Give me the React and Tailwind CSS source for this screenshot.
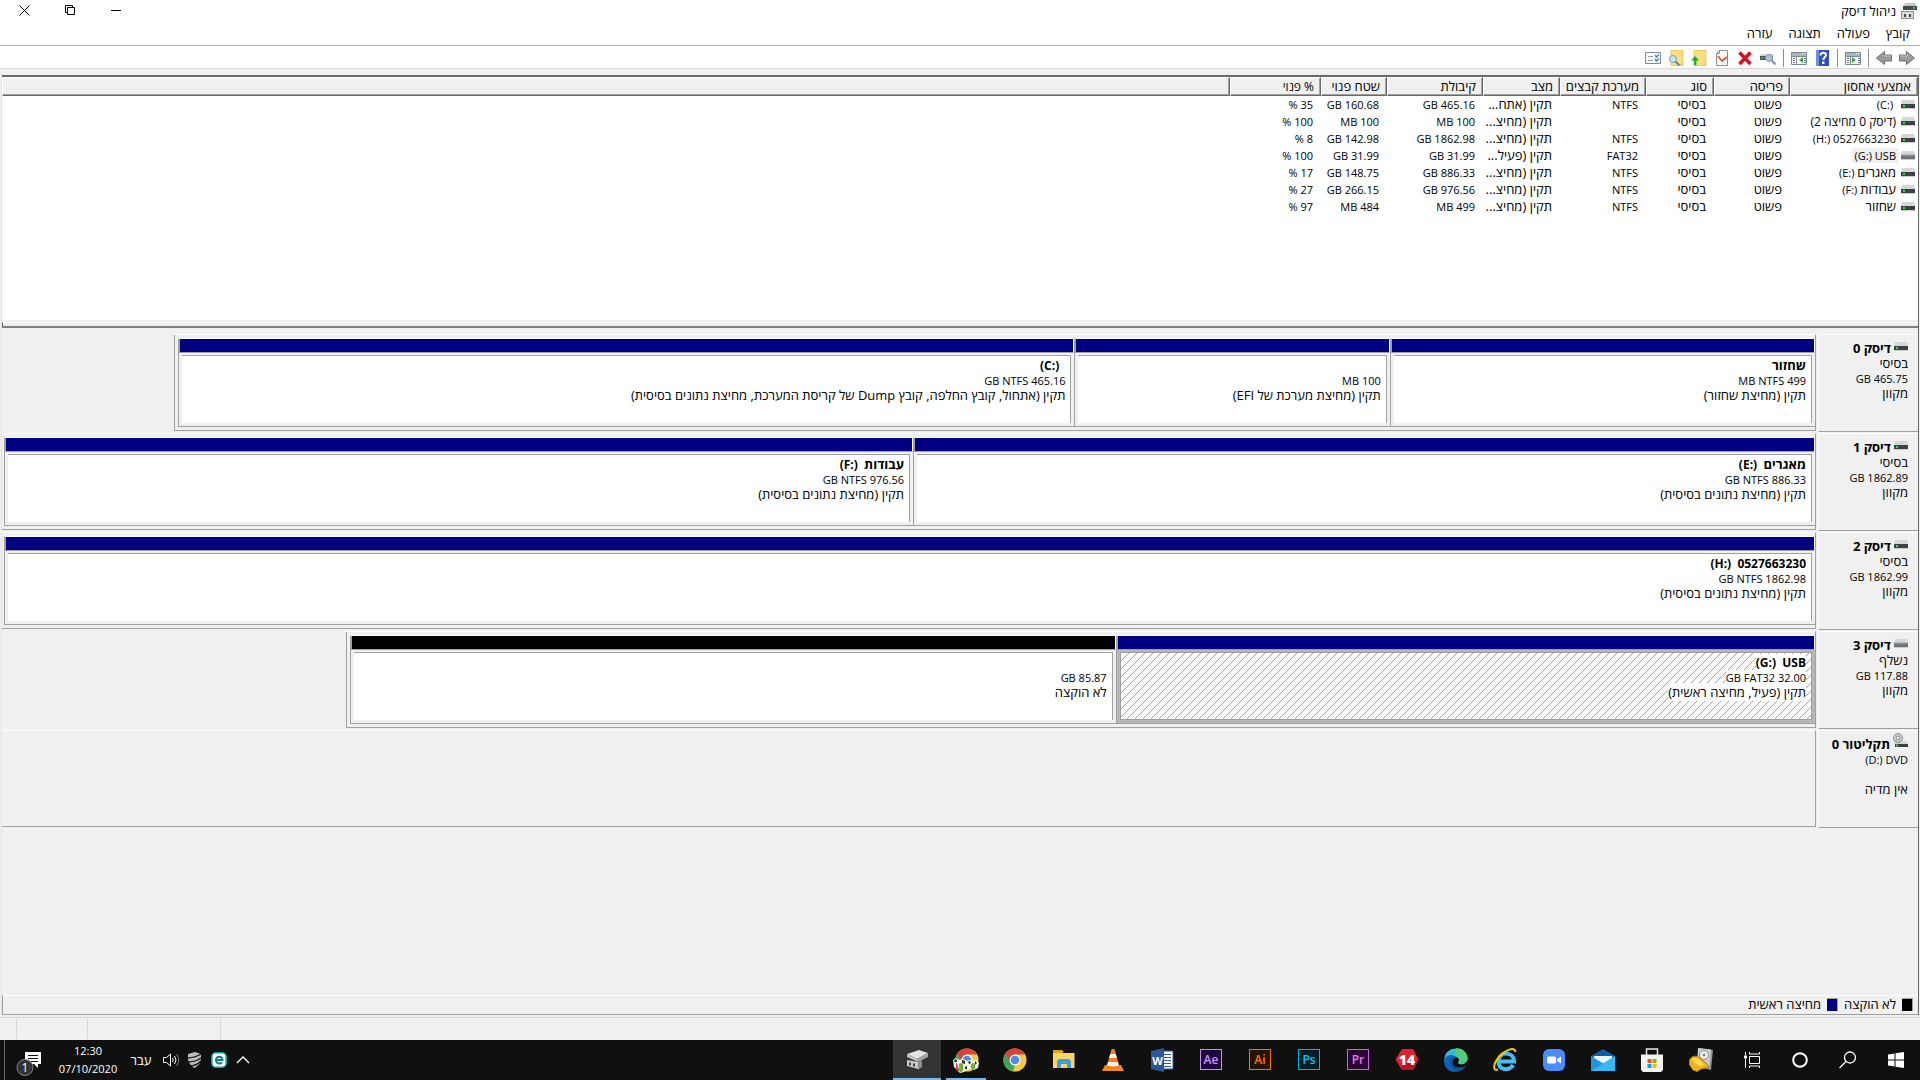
const MENUS = ['קובץ', 'פעולה', 'תצוגה', 'עזרה'];

const COLUMNS = [
  { key: 'name', label: 'אמצעי אחסון', width: 'w-[128px]' },
  { key: 'layout', label: 'פריסה', width: 'w-[76px]' },
  { key: 'type', label: 'סוג', width: 'w-[68px]' },
  { key: 'fs', label: 'מערכת קבצים', width: 'w-[86px]' },
  { key: 'status', label: 'מצב', width: 'w-[77px]' },
  { key: 'capacity', label: 'קיבולת', width: 'w-[96px]' },
  { key: 'free', label: 'שטח פנוי', width: 'w-[66px]' },
  { key: 'percent', label: '% פנוי', width: 'w-[91px]' },
];

const VOLUMES = [
  { name: '', letter: 'C', fs: 'NTFS', status: 'תקין (אתח...', capacity: '465.16 GB', free: '160.68 GB', percent: '35 %' },
  { name: '(דיסק 0 מחיצה 2)', fs: '', status: 'תקין (מחיצ...', capacity: '100 MB', free: '100 MB', percent: '100 %' },
  { name: '0527663230', letter: 'H', fs: 'NTFS', status: 'תקין (מחיצ...', capacity: '1862.98 GB', free: '142.98 GB', percent: '8 %' },
  { name: 'USB', letter: 'G', fs: 'FAT32', status: 'תקין (פעיל...', capacity: '31.99 GB', free: '31.99 GB', percent: '100 %', selected: true },
  { name: 'מאגרים', letter: 'E', fs: 'NTFS', status: 'תקין (מחיצ...', capacity: '886.33 GB', free: '148.75 GB', percent: '17 %' },
  { name: 'עבודות', letter: 'F', fs: 'NTFS', status: 'תקין (מחיצ...', capacity: '976.56 GB', free: '266.15 GB', percent: '27 %' },
  { name: 'שחזור', fs: 'NTFS', status: 'תקין (מחיצ...', capacity: '499 MB', free: '484 MB', percent: '97 %' },
];

const DISKS = [
  {
    title: 'דיסק 0',
    lines: ['בסיסי', '465.75 GB', 'מקוון'],
    span: 90.5,
    partitions: [
      { name: 'שחזור', size: '499 MB NTFS', status: 'תקין (מחיצת שחזור)', weight: 425 },
      { size: '100 MB', status: 'תקין (מחיצת מערכת של EFI)', weight: 315 },
      { name: '', letter: 'C', size: '465.16 GB NTFS', status: 'תקין (אתחול, קובץ החלפה, קובץ Dump של קריסת המערכת, מחיצת נתונים בסיסית)', weight: 897 },
    ],
  },
  {
    title: 'דיסק 1',
    lines: ['בסיסי', '1862.89 GB', 'מקוון'],
    span: 100,
    partitions: [
      { name: 'מאגרים', letter: 'E', size: '886.33 GB NTFS', status: 'תקין (מחיצת נתונים בסיסית)', weight: 902 },
      { name: 'עבודות', letter: 'F', size: '976.56 GB NTFS', status: 'תקין (מחיצת נתונים בסיסית)', weight: 909 },
    ],
  },
  {
    title: 'דיסק 2',
    lines: ['בסיסי', '1862.99 GB', 'מקוון'],
    span: 100,
    partitions: [
      { name: '0527663230', letter: 'H', size: '1862.98 GB NTFS', status: 'תקין (מחיצת נתונים בסיסית)', weight: 1 },
    ],
  },
  {
    title: 'דיסק 3',
    lines: ['נשלף', '117.88 GB', 'מקוון'],
    span: 81,
    removable: true,
    partitions: [
      { name: 'USB', letter: 'G', size: '32.00 GB FAT32', status: 'תקין (פעיל, מחיצה ראשית)', weight: 700, selected: true },
      { size: '85.87 GB', status: 'לא הוקצה', weight: 766, unallocated: true },
    ],
  },
  { title: 'תקליטור 0', lines: ['DVD', '', 'אין מדיה'], letter: 'D', optical: true },
];

// Hebrew glyphs are smaller on the body than Latin ones, so they get a larger size
function sizeOf(text = '') {
  if (!/[א-ת]/.test(text)) return 'text-[11px]';
  return /[\d%]/.test(text) ? 'text-[12px]' : 'text-[13px]';
}

export default function App() {
  return (
    <div
      dir="rtl"
      className="flex min-h-screen flex-col bg-[#f0f0f0] font-['Open_Sans','Liberation_Sans',sans-serif] text-[11px] leading-[15px] text-black"
    >
      <TitleBar />
      <MenuBar />
      <Toolbar />
      <main className="mt-[6px] mr-px ml-px flex grow flex-col border-r border-l border-r-[#696969] border-l-[#e3e3e3]">
        <VolumeList />
        <div className="h-[8px] pt-[2px]">
          <div className="h-[6px] border-t border-b-2 border-l border-t-white border-b-[#808080] border-l-[#696969]" />
        </div>
        <section className="grow pt-[6px]">
          {DISKS.map((disk) => (
            <DiskRow key={disk.title} disk={disk} />
          ))}
        </section>
        <Legend />
      </main>
      <footer dir="ltr" className="mt-[2px] flex h-[23px] border-t border-[#d7d7d7] py-px">
        <span className="w-[17px] border-r border-[#d7d7d7]" />
        <span className="w-[71px] border-r border-[#d7d7d7]" />
        <span className="w-[133px] border-r border-[#d7d7d7]" />
      </footer>
      <Taskbar />
    </div>
  );
}

function TitleBar() {
  return (
    <header className="flex h-[22px] items-center bg-white pr-[3px]">
      <TitleIcon />
      <h1 className="mr-[5px] text-[13px]">ניהול דיסק</h1>
      <div dir="ltr" className="mr-auto flex h-full pl-px">
        <button aria-label="סגור" className="flex w-[46px] justify-center pt-[5px]">
          <svg width="11" height="11" viewBox="0 0 11 11" stroke="#000" fill="none">
            <path d="M.5.5l10 10M10.500.5l-10 10" />
          </svg>
        </button>
        <button aria-label="שחזר" className="flex w-[46px] justify-center pt-[5px]">
          <svg width="10" height="10" viewBox="0 0 10 10" stroke="#000" fill="none">
            <path d="M2.500 7.500h-2v-7h7v2M2.500 2.500h7v7h-7z" />
          </svg>
        </button>
        <button aria-label="מזער" className="flex w-[46px] justify-center pt-[5px]">
          <svg width="10" height="11" viewBox="0 0 10 11" stroke="#000">
            <path d="M0 5.500h10" />
          </svg>
        </button>
      </div>
    </header>
  );
}

function MenuBar() {
  return (
    <nav className="flex h-[24px] items-center gap-[16px] border-b border-[#abadb3] bg-white pr-[10px] text-[13px]">
      {MENUS.map((menu) => (
        <button key={menu}>{menu}</button>
      ))}
    </nav>
  );
}

function Toolbar() {
  return (
    <div className="flex h-[23px] items-center gap-[7px] border-b border-[#d9d9d9] bg-white pt-px pr-[5px]">
      <Tool label="קדימה">
        <path d="M.5 5h7V1.500L15.500 8l-8 6.500V11h-7z" fill="#9b9b9b" stroke="#6e6e6e" />
        <path d="M1.500 6h7V4" fill="none" stroke="#c4c4c4" />
      </Tool>
      <Tool label="אחורה">
        <path d="M15.500 5h-7V1.500L.5 8l8 6.500V11h7z" fill="#9b9b9b" stroke="#6e6e6e" />
        <path d="M14.500 6h-7" fill="none" stroke="#c4c4c4" />
      </Tool>
      <Separator />
      <Tool label="הצג עץ">
        <PaneIcon arrow="M7 7v6l4-3z" />
      </Tool>
      <Separator />
      <Tool label="עזרה">
        <path d="M2 0h13v16H2z" fill="#2d50b8" />
        <path d="M2 0h3v16H2z" fill="#6f8fe0" />
        <path d="M6.500 5.500c0-4 5.500-3.500 5.500-.5 0 2-2.700 2-2.700 5" stroke="#fff" strokeWidth="2" fill="none" />
        <path d="M8 11.500h2.500V14H8z" fill="#fff" />
      </Tool>
      <Tool label="חלונית">
        <PaneIcon arrow="M12 7v6l-4-3z" />
      </Tool>
      <Separator />
      <Tool label="סרוק דיסקים">
        <path d="M1 4h12l1 2H0z" fill="#d0d3d5" />
        <path d="M0 6h13v4H0z" fill="#4c5052" />
        <path d="M1.500 7h2v2h-2z" fill="#28d340" />
        <circle cx="9" cy="8" r="3.500" fill="#a9c4d6" stroke="#8aa0ae" />
        <path d="M11.500 10.500l4 4" stroke="#7990a8" strokeWidth="2" />
      </Tool>
      <Tool label="מחק">
        <path d="M2.500 2.500l11 11.500M13.500 2.500L2.500 14" stroke="#d5101c" strokeWidth="3.500" />
      </Tool>
      <Tool label="מאפיינים">
        <path d="M5.500.5h8v15h-11V3.500z" fill="#fafafa" stroke="#8c8c8c" />
        <path d="M5.500.5v3h-3" fill="none" stroke="#8c8c8c" />
        <path d="M4 6l4 5 5-4" stroke="#e0532c" strokeWidth="1.800" fill="none" />
      </Tool>
      <Tool label="תיקיה למעלה">
        <FolderSheet />
        <path d="M3 15v-4.500H0L4 6l4 4.500H5.500V15z" fill="#1fae1f" />
      </Tool>
      <Tool label="חפש בתיקיה">
        <FolderSheet />
        <circle cx="5" cy="9" r="3.500" fill="#c6e2f2" stroke="#7d9fb5" />
        <path d="M7.500 11.500l4 4" stroke="#5a86b0" strokeWidth="2" />
      </Tool>
      <Tool label="רשימת משימות">
        <path d="M.5 2.500h15v11H.5z" fill="#f7fafc" stroke="#7d8b97" />
        <path d="M3 6.500h5M3 10.500h5" stroke="#9aa3aa" />
        <path d="M10 5l1.500 2L14 4.500M10 9l1.500 2L14 8.500" stroke="#3a8edb" strokeWidth="1.500" fill="none" />
      </Tool>
    </div>
  );
}

function Tool({ label, children }) {
  return (
    <button aria-label={label} className="size-[16px]">
      <svg width="16" height="16" viewBox="0 0 16 16">
        {children}
      </svg>
    </button>
  );
}

function Separator() {
  return <span className="h-[18px] w-px bg-[#8d8d8d]" />;
}

function PaneIcon({ arrow }) {
  return (
    <>
      <path d="M.5 2.500h15v12H.5z" fill="#fff" stroke="#7e8b97" />
      <path d="M1 3h14v3H1z" fill="#aab6c0" />
      <path d="M11 3.500h3" stroke="#fff" strokeDasharray="1 1" />
      <path d="M5.500 6v9M1 6.500h14" stroke="#7e8b97" />
      <path d="M2 8.500h2M2 10.500h2M2 12.500h2M13 8.500h2M13 10.500h2M13 12.500h2" stroke="#5f7080" />
      <path d={arrow} fill="#30b030" />
    </>
  );
}

function FolderSheet() {
  return (
    <>
      <path d="M3 .5h12v15H3z" fill="#fbe083" stroke="#e8c862" />
      <path d="M11 16l4-5v5z" fill="#efcb5c" />
    </>
  );
}

function TitleIcon() {
  return (
    <svg width="16" height="16" viewBox="0 0 16 16">
      <path d="M4 0h10l2 4H2z" fill="#c6c9ca" />
      <path d="M2 3h14v4H2z" fill="#45494b" />
      <path d="M12 4h2v2h-2z" fill="#2bd54a" />
      <path d="M0 8h13v8H0z" fill="#8e9091" />
      <path d="M1 9h11v6H1z" fill="#dcdcdc" />
      <path d="M3 11h2v3H3zM8 11h2v3H8z" fill="#4b4b4b" />
    </svg>
  );
}

function DriveIcon({ removable }) {
  return (
    <svg width="14" height="9" viewBox="0 0 14 9" className="shrink-0">
      <path d="M1 0h12l1 4H0z" fill="#d4d7d9" />
      <path d="M0 4h14v4H0z" fill={removable ? '#6f7476' : '#3d4143'} />
      <path d="M0 8h14v1H0z" fill="#c9cbcc" />
      {removable ? <path d="M0 3h14v1.500H0z" fill="#b5b9bb" /> : <path d="M2 5h2v2H2z" fill="#28e04a" />}
    </svg>
  );
}

function OpticalIcon() {
  return (
    <svg width="15" height="15" viewBox="0 0 15 15" className="shrink-0">
      <path d="M1 8h13l1 3H1z" fill="#d4d7d9" />
      <circle cx="5" cy="5" r="4.500" fill="#c9cccd" stroke="#8d9193" />
      <circle cx="5" cy="5" r="1.800" fill="#f4f4f4" stroke="#8d9193" />
      <path d="M2 11h13v3H2z" fill="#3d4143" />
      <path d="M3 11.500h2v2H3z" fill="#28e04a" />
    </svg>
  );
}

// Drive letters keep the colon on the right even inside Hebrew text
function VolumeName({ name, letter, gap = ' ' }) {
  return (
    <>
      {name}
      {letter ? (
        <>
          {gap}
          <bdi dir="ltr">({letter}:)</bdi>
        </>
      ) : null}
    </>
  );
}

function VolumeList() {
  return (
    <section className="h-[245px] border-t-2 border-[#696969] bg-white">
      <table className="w-full table-fixed border-separate border-spacing-0">
        <thead>
          <tr>
            {COLUMNS.map((column) => (
              <HeaderCell key={column.key} width={column.width}>
                {column.label}
              </HeaderCell>
            ))}
            <HeaderCell />
          </tr>
        </thead>
        <tbody>
          {VOLUMES.map((volume) => (
            <tr key={volume.capacity + volume.name} className="h-[17px]">
              <td className="p-0 pr-[3px]">
                <div className="flex h-[17px] items-center gap-[2px]">
                  <DriveIcon removable={volume.selected} />
                  <span className={`px-[3px] whitespace-pre ${volume.selected ? 'bg-[#f0f0f0]' : ''}`}>
                    <VolumeName
                      name={<span className={sizeOf(volume.name)}>{volume.name}</span>}
                      letter={volume.letter}
                    />
                  </span>
                </div>
              </td>
              <Cell>פשוט</Cell>
              <Cell>בסיסי</Cell>
              <Cell>{volume.fs}</Cell>
              <Cell>{volume.status}</Cell>
              <Cell>{volume.capacity}</Cell>
              <Cell>{volume.free}</Cell>
              <Cell>{volume.percent}</Cell>
              <td />
            </tr>
          ))}
        </tbody>
      </table>
    </section>
  );
}

function HeaderCell({ width = '', children }) {
  return (
    <th
      className={`h-[19px] border-t border-r border-b border-l border-t-white border-r-[#696969] border-b-[#696969] border-l-white bg-[#f0f0f0] p-0 pr-[6px] text-right font-normal whitespace-nowrap shadow-[inset_-1px_-1px_0_#a0a0a0] ${sizeOf(children)} ${width}`}
    >
      {children}
    </th>
  );
}

function Cell({ children }) {
  return <td className={`p-0 pr-[8px] whitespace-nowrap ${sizeOf(children)}`}>{children}</td>;
}

function DiskRow({ disk }) {
  return (
    <article className="flex h-[99px]">
      <div className="h-[98px] w-[100px] shrink-0 border-t border-b border-l border-t-white border-b-[#a0a0a0] border-l-white pt-[6px] pr-[10px]">
        <h2 className="flex items-start gap-[3px] text-[13px] font-bold">
          {disk.optical ? (
            <span className="-mt-[4px]">
              <OpticalIcon />
            </span>
          ) : (
            <span className="pt-px">
              <DriveIcon removable={disk.removable} />
            </span>
          )}
          {disk.title}
        </h2>
        {disk.lines.map((line, index) => (
          <p key={index} className={`h-[15px] ${sizeOf(line)}`}>
            <VolumeName name={line} letter={index === 0 ? disk.letter : undefined} />
          </p>
        ))}
      </div>
      <div className="mr-[2px] h-[97px] grow border-t border-r border-b border-t-white border-r-[#a0a0a0] border-b-[#a0a0a0]">
        {disk.partitions ? (
          <div className="flex h-full bg-[#f0f0f0]">
            <div
              className={`flex h-[96px] border-b border-[#a0a0a0] py-[3px] ${
                disk.span < 100 ? 'border-l pl-[3px]' : 'pl-[2px]'
              }`}
              style={{ width: `${disk.span}%` }}
            >
              {disk.partitions.map((partition) => (
                <Partition key={partition.size} partition={partition} />
              ))}
            </div>
            {disk.span < 100 ? <div className="-mt-px h-[97px] grow bg-[#f0f0f0]" /> : null}
          </div>
        ) : null}
      </div>
    </article>
  );
}

function Partition({ partition }) {
  const { name, letter, size, status, weight, selected, unallocated } = partition;
  const hatch =
    'border border-[#a0a0a0] bg-[linear-gradient(to_bottom_right,#fff_46%,#a0a0a0_46%,#a0a0a0_54%,#fff_54%)] bg-[length:8px_8px]';

  return (
    <div
      className={`flex min-w-0 basis-0 flex-col border-t border-b border-l border-t-white border-b-[#a0a0a0] border-l-[#a0a0a0] ${
        selected ? 'bg-[#b8b8b8]' : 'bg-[#f0f0f0]'
      }`}
      style={{ flexGrow: weight }}
    >
      <div
        className={`h-[14px] shrink-0 border-r border-b border-l border-r-white border-b-[#a0a0a0] border-l-[#a0a0a0] ${
          unallocated ? 'bg-black' : 'bg-[#000080]'
        }`}
      />
      <div
        className={`mx-[3px] mt-[2px] mb-[3px] grow pt-[2px] pr-[5px] ${
          selected ? hatch : 'border-t border-r border-[#a0a0a0] bg-white'
        }`}
      >
        <p className="h-[15px] text-[12px] font-bold whitespace-pre">
          <span className={selected ? 'bg-white' : ''}>
            <VolumeName
              name={<span className={/[א-ת]/.test(name) ? 'text-[13px]' : ''}>{name}</span>}
              letter={letter}
              gap="  "
            />
          </span>
        </p>
        <p className="h-[15px]">
          <span className={selected ? 'bg-white' : ''}>{size}</span>
        </p>
        <p className="h-[15px] text-[13px] whitespace-nowrap">
          <span className={selected ? 'bg-white' : ''}>{status}</span>
        </p>
      </div>
    </div>
  );
}

function Legend() {
  return (
    <div className="flex h-[20px] items-center gap-[6px] border-t border-b border-l border-t-white border-b-[#a0a0a0] border-l-[#a0a0a0] pr-[5px] pb-[2px] text-[13px]">
      <span className="h-[13px] w-[11px] border-t border-r border-[#a0a0a0] bg-black" />
      <span>לא הוקצה</span>
      <span className="h-[13px] w-[11px] border-t border-r border-[#a0a0a0] bg-[#000080]" />
      <span>מחיצה ראשית</span>
    </div>
  );
}

const APPS = [
  { label: 'ניהול כוננים', Icon: RecoveryIcon },
  { label: 'Microsoft Store', Icon: StoreIcon },
  { label: 'דואר', Icon: MailIcon },
  { label: 'Zoom', Icon: ZoomIcon },
  { label: 'Internet Explorer', Icon: ExplorerIcon },
  { label: 'Edge', Icon: EdgeIcon },
  { label: 'ערוץ 14', Icon: Badge14 },
  { label: 'Premiere', Icon: () => <Adobe text="Pr" tone="border-[#d45cf0] bg-[#2a0634] text-[#e07af5]" /> },
  { label: 'Photoshop', Icon: () => <Adobe text="Ps" tone="border-[#00b4e4] bg-[#001d26] text-[#00c8ff]" /> },
  { label: 'Illustrator', Icon: () => <Adobe text="Ai" tone="border-[#f07800] bg-[#261300] text-[#ff7c00]" /> },
  { label: 'After Effects', Icon: () => <Adobe text="Ae" tone="border-[#c090f8] bg-[#1f0540] text-[#c99cff]" /> },
  { label: 'Word', Icon: WordIcon },
  { label: 'VLC', Icon: VlcIcon },
  { label: 'סייר הקבצים', Icon: FolderIcon },
  { label: 'Chrome', Icon: ChromeIcon },
  { label: 'Chrome – פרופיל', Icon: ChromeProfileIcon, open: true },
  { label: 'ניהול דיסק', Icon: DiskManagementIcon, active: true },
];

function Taskbar() {
  return (
    <div className="flex h-[40px] bg-[#101010] text-white">
      <SystemButton label="התחל">
        <path d="M4 6.500l6.500-1v6H4zM11.500 5.300L20 4v7.500h-8.500zM4 12.500h6.500v6L4 17.500zM11.500 12.500H20V20l-8.500-1.300z" fill="#fff" />
      </SystemButton>
      <SystemButton label="חיפוש">
        <circle cx="14" cy="9.500" r="5.500" fill="none" stroke="#fff" strokeWidth="1.300" />
        <path d="M10 13.500l-6.500 6.500" stroke="#fff" strokeWidth="1.300" />
      </SystemButton>
      <SystemButton label="Cortana">
        <circle cx="12" cy="12" r="6.800" fill="none" stroke="#fff" strokeWidth="2" />
      </SystemButton>
      <SystemButton label="תצוגת משימות">
        <path d="M9.500 8.500h10v7h-10zM9.500 4v2h10V4M9.500 20v-2h10v2M5.500 4v3M5.500 11v9" fill="none" stroke="#fff" />
        <path d="M4 7.500h3v3H4z" fill="#fff" />
      </SystemButton>
      <div className="mr-[3px] flex gap-px">
        {APPS.map(({ label, Icon, active, open }) => (
          <button
            key={label}
            aria-label={label}
            className={`flex w-[48px] flex-col items-center justify-between pt-[8px] ${active ? 'bg-[#333]' : ''}`}
          >
            <Icon />
            {active || open ? <span className={`h-[2px] bg-[#76b9ed] ${active ? 'w-full' : 'w-[40px]'}`} /> : null}
          </button>
        ))}
      </div>
      <Tray />
    </div>
  );
}

function SystemButton({ label, children }) {
  return (
    <button aria-label={label} className="flex w-[48px] items-center justify-center">
      <svg width="24" height="24" viewBox="0 0 24 24">
        {children}
      </svg>
    </button>
  );
}

function Tray() {
  return (
    <div className="mr-auto flex items-center">
      <button aria-label="הצג סמלים מוסתרים" className="flex w-[24px] justify-center">
        <svg width="14" height="8" viewBox="0 0 14 8">
          <path d="M1 7l6-6 6 6" fill="none" stroke="#fff" strokeWidth="1.300" />
        </svg>
      </button>
      <button aria-label="ESET" className="flex w-[24px] justify-center">
        <svg width="16" height="16" viewBox="0 0 16 16">
          <rect x=".8" y=".8" width="14.400" height="14.400" rx="4" fill="#fff" stroke="#169a9e" strokeWidth="1.600" />
          <path d="M4.500 8h7c0-4-6.500-4.500-6.500 0 0 4 4.500 4 6 2.500" fill="none" stroke="#0f8287" strokeWidth="2" />
        </svg>
      </button>
      <button aria-label="אבטחה" className="flex w-[24px] justify-center">
        <svg width="16" height="16" viewBox="0 0 16 16">
          <path d="M1 2l7-2 6 2v5c0 4-3 7-6.500 9C4 14 1 10 1 7z" fill="#bdbdbd" />
          <path d="M0 6c5 0 9-1 14-4M1 10c5 0 9-1 13-4M3 14c4 0 8-2 11-5" fill="none" stroke="#101010" strokeWidth="1.300" />
        </svg>
      </button>
      <button aria-label="עוצמת קול" className="flex w-[24px] justify-center">
        <svg width="17" height="14" viewBox="0 0 17 14" fill="none" stroke="#fff">
          <path d="M.5 4.500h3l4-3.500v12l-4-3.500h-3z" />
          <path d="M9.500 5q1.500 2 0 4M11.500 3q3 4 0 8" />
          <path d="M13.500 1q4.500 6 0 12" stroke="#777" />
        </svg>
      </button>
      <button className="w-[36px] text-center text-[13px]">עבר</button>
      <button dir="ltr" className="flex w-[70px] flex-col items-center text-[11px] leading-[18px]">
        <span>12:30</span>
        <span>07/10/2020</span>
      </button>
      <button aria-label="הודעות" className="flex w-[48px] justify-center pt-[8px]">
        <svg width="26" height="24" viewBox="0 0 26 24">
          <path d="M9 0h16v12h-3v4l-4-4H9z" fill="#fff" />
          <path d="M12 3.500h10M12 6.500h10M15 9.500h7" stroke="#101010" />
          <circle cx="9" cy="15.500" r="8" fill="#333" stroke="#888" />
          <text x="9" y="20" fontSize="12" fill="#fff" textAnchor="middle">
            1
          </text>
        </svg>
      </button>
      <span className="ml-[4px] h-full w-px bg-[#666]" />
    </div>
  );
}

function Adobe({ text, tone }) {
  return (
    <span
      dir="ltr"
      className={`mt-px flex h-[21px] w-[22px] items-center justify-center border text-[12px] leading-[15px] font-semibold ${tone}`}
    >
      {text}
    </span>
  );
}

function AppSvg({ children }) {
  return (
    <svg width="24" height="24" viewBox="0 0 24 24">
      {children}
    </svg>
  );
}

function RecoveryIcon() {
  return (
    <AppSvg>
      <path d="M9 0l15 2-2 20-12-3z" fill="#8f9598" />
      <path d="M9 0l13 1.500-1.500 16.500L8 16z" fill="#c9cdcf" />
      <circle cx="15" cy="7" r="4.500" fill="#eceeee" stroke="#8a8f91" />
      <circle cx="15" cy="7" r="1.200" fill="#777" />
      <path d="M1 11c2-3 7-4 10-1l7 6c2 1 1 4-1 4l-5 1-4 2.500-4-1.500-4-6z" fill="#efb41c" stroke="#b98106" />
      <path d="M3 11c3-2 6-1 8 1l4 5-4 1-5-3z" fill="#ffd95a" />
    </AppSvg>
  );
}

function StoreIcon() {
  return (
    <AppSvg>
      <path d="M6.500 8V1h11v7" fill="none" stroke="#e8e8e8" strokeWidth="1.500" />
      <path d="M1 6.500h22V22l-2 2H3l-2-2z" fill="#f2f2f2" />
      <path d="M7.500 11h4v4h-4z" fill="#f25022" />
      <path d="M12.500 11h4v4h-4z" fill="#7fba00" />
      <path d="M7.500 16h4v4h-4z" fill="#00a4ef" />
      <path d="M12.500 16h4v4h-4z" fill="#ffb900" />
    </AppSvg>
  );
}

function MailIcon() {
  return (
    <AppSvg>
      <path d="M0 8l12-7 12 7v3H0z" fill="#0a5fa8" />
      <path d="M3 8h18v9H3z" fill="#f3f3f3" />
      <path d="M0 8l12 8 12-8v15H0z" fill="#35b8f1" />
      <path d="M0 8l24 15H0z" fill="#1d96de" />
      <path d="M24 8L0 23h24z" fill="#35b8f1" />
    </AppSvg>
  );
}

function ZoomIcon() {
  return (
    <AppSvg>
      <rect x="1" y="1" width="22" height="22" rx="6" fill="#4a8cff" />
      <rect x="5" y="8.500" width="9" height="7" rx="1.500" fill="#fff" />
      <path d="M15 11l4-2.500v7L15 13z" fill="#fff" />
    </AppSvg>
  );
}

function ExplorerIcon() {
  return (
    <AppSvg>
      <path d="M5 13.500h16c0-10-15-11-15.500 0C5.500 23 17 23 20 17" fill="none" stroke="#45bdf0" strokeWidth="4" />
      <path d="M22.500 4C22-2 12 2 6 9S-.5 23.500 5 21.500" fill="none" stroke="#f5c417" strokeWidth="2" />
    </AppSvg>
  );
}

function EdgeIcon() {
  return (
    <AppSvg>
      <path d="M.5 10C2-2 21-3 23.500 10c.5 6-7 8-9.500 5 2-3 1-6-3-6C6 8 .5 9 0 14z" fill="#35b9d8" />
      <path d="M12 0c7 0 12 5 11.800 10.500C23 16 16 17 14 15c2-3 1-7-3-8z" fill="#5ccf62" opacity=".8" />
      <path d="M0 13c1-6 8-8 12-4-4 1-5 5-3 8 3 4 9 3 13 1-5 8-21 9-22-5z" fill="#0c66b8" />
      <path d="M6 14c0-4 3-6 6-5-3 2-4 5-3 8 3 4 9 3 13 1-2 3-5 5-9 5-4-1-7-4-7-9z" fill="#12509a" />
    </AppSvg>
  );
}

function Badge14() {
  return (
    <AppSvg>
      <path d="M7 1h11l5.500 10.500L18 22H7L.5 11.500z" fill="#e2232e" />
      <path d="M7 22h11l5.500-10.500L7 16z" fill="#bd1622" />
      <text x="12" y="17" fontSize="14" fontWeight="800" fill="#fff" textAnchor="middle" direction="ltr">
        14
      </text>
    </AppSvg>
  );
}

function WordIcon() {
  return (
    <AppSvg>
      <path d="M11 3h12v18H11z" fill="#fff" stroke="#2b579a" />
      <path d="M14 6.500h7M14 9.500h7M14 12.500h7M14 15.500h7M14 18.500h7" stroke="#2b579a" />
      <path d="M1 3l13-3v24L1 21z" fill="#2b579a" />
      <text x="7.500" y="16.500" fontSize="11" fontWeight="700" fill="#fff" textAnchor="middle">
        W
      </text>
    </AppSvg>
  );
}

function VlcIcon() {
  return (
    <AppSvg>
      <path d="M4 17h16l3 6H1z" fill="#f08a1c" />
      <path d="M10.500 1h3l5 18q-6.500 3-13 0z" fill="#f47f10" />
      <path d="M9.300 6h5.400l1.100 4H8.200zM7 14h10l1 3.500q-6 2-12 0z" fill="#f1f1f1" />
    </AppSvg>
  );
}

function FolderIcon() {
  return (
    <AppSvg>
      <path d="M1 2h9l2 2h-1v4H1z" fill="#dda21c" />
      <path d="M1 5h21.500v15H1z" fill="#fdd567" />
      <path d="M5 20v-7l2-2h10l2 2v7h-4v-4H9v4z" fill="#3f9de0" />
    </AppSvg>
  );
}

function ChromeWheel() {
  return (
    <>
      <circle cx="12" cy="12" r="11.500" fill="#f7cb3b" />
      <path d="M2 6.300C6-1.500 18-1.500 22 6.500H12L7 15z" fill="#d9443a" />
      <path d="M2 6.300l5.500 8.700L12 17l-2 6.300C1 21.500-2 13 2 6.300z" fill="#3fa557" />
      <circle cx="12" cy="12" r="5.500" fill="#fff" />
      <circle cx="12" cy="12" r="4.300" fill="#4c8bf0" />
    </>
  );
}

function ChromeIcon() {
  return (
    <AppSvg>
      <ChromeWheel />
    </AppSvg>
  );
}

function ChromeProfileIcon() {
  return (
    <svg width="26" height="26" viewBox="0 0 26 26">
      <g transform="translate(2 0)">
        <ChromeWheel />
      </g>
      <path d="M0 12l3-2 3 2 4-1 4 2 3-1 3 1 4-1 2 3-1 5-4 2-4-1-3 1-3 2-4 1-3-3-3-3z" fill="#f4f4f0" />
      <path d="M2 11l2 1v2H1zM9 12l3 1v3l-3-1zM15 14l2-1 1 2-2 1zM22 13l2 2-2 2zM12 19l2-1v3h-2z" fill="#2b2b2b" />
      <path d="M3 16l1-1 1 5 2 2-2 1-2-2z" fill="#d8372c" />
      <rect x="6" y="15" width="4" height="9" rx="2" fill="#62b52f" />
      <rect x="18" y="15" width="4" height="7" rx="2" fill="#62b52f" />
    </svg>
  );
}

function DiskManagementIcon() {
  return (
    <AppSvg>
      <path d="M2 6l12-4 9 3-11 6z" fill="#e2e2e2" />
      <path d="M12 11l11-6v4l-10 5z" fill="#a5a5a5" />
      <path d="M2 6l10 5 1 3L2 9z" fill="#c4c4c4" />
      <path d="M2 12l11 2v7l-11-3z" fill="#c9c9c9" />
      <path d="M13 14l4-2v7l-4 3z" fill="#8d8d8d" />
      <path d="M4 14.500h2v3H4zM8 15.500h2v3H8z" fill="#444" />
    </AppSvg>
  );
}
